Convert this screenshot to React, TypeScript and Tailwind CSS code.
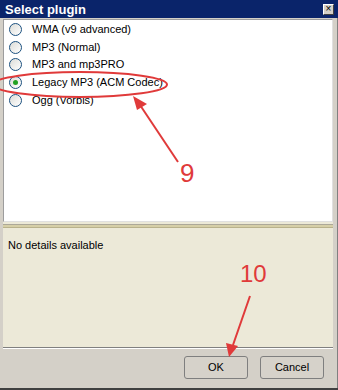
import React from "react";

const plugins = [
  "WMA (v9 advanced)",
  "MP3 (Normal)",
  "MP3 and mp3PRO",
  "Legacy MP3 (ACM Codec)",
  "Ogg (Vorbis)",
];

const Radio: React.FC<{ checked?: boolean }> = ({ checked }) => (
  <span className="flex items-center justify-center w-[13px] h-[13px] rounded-full border-[1.5px] border-[#1c5180] bg-gradient-to-br from-[#dcdcd7] to-white">
    {checked && <span className="w-[5px] h-[5px] rounded-full bg-[#21a121]" />}
  </span>
);

const Button: React.FC<{ label: string }> = ({ label }) => (
  <button className="w-[64px] h-[23px] rounded-[3px] border border-[#7f7f7f] bg-[#d6d2ca] text-[11px] text-black">
    {label}
  </button>
);

const App: React.FC = () => {
  return (
    <div
      className="relative w-[338px] h-[390px] flex flex-col bg-[#d4d0c8] border-b-2 border-[#404040] overflow-hidden"
      style={{ fontFamily: '"Liberation Sans", Arial, sans-serif' }}
    >
      {/* title bar */}
      <div className="h-[18px] bg-[#0a246a] flex items-center justify-between pl-[5px] pr-[4px]">
        <span className="text-white text-[13px] font-bold leading-none">Select plugin</span>
        <span className="w-[11px] h-[11px] flex items-center justify-center bg-[#d4d0c8] border border-t-white border-l-white border-r-[#404040] border-b-[#404040] text-[10px] leading-none text-black">
          ×
        </span>
      </div>

      <div className="flex-1 flex flex-col pl-[3px] pr-[4px] border-r border-[#808080]">
        {/* plugin list */}
        <div className="mt-[1px] h-[203px] bg-white border border-[#9d9d9d] border-r-[#e0e0e0] border-b-[#e0e0e0] pt-[0.5px]">
          {plugins.map((p, i) => (
            <div key={p} className="h-[17.7px] flex items-center pl-[5px] gap-[10px]">
              <Radio checked={i === 3} />
              <span className="text-[11px] text-black leading-none">{p}</span>
            </div>
          ))}
        </div>

        {/* splitter */}
        <div className="flex flex-col">
          <div className="h-[2px] bg-[#ece9d8]" />
          <div className="h-[1px] bg-[#aca899]" />
          <div className="h-[2px] bg-[#d6cfa8]" />
          <div className="h-[1px] bg-[#b9b28c]" />
          <div className="h-[1px] bg-[#ece9d8]" />
        </div>

        {/* details */}
        <div className="h-[118px] bg-[#ece9d8] px-[5px] pt-[3px]">
          <span className="text-[11px] leading-[16px] text-black">No details available</span>
        </div>
        <div className="h-[1px] bg-[#808080]" />
        <div className="h-[1px] bg-white" />

        {/* buttons */}
        <div className="flex-1 flex items-start justify-end gap-[12px] pt-[7px] pr-[9px]">
          <Button label="OK" />
          <Button label="Cancel" />
        </div>
      </div>

      {/* annotations */}
      <svg className="absolute inset-0 pointer-events-none" width="338" height="390">
        <ellipse cx="80" cy="84.5" rx="87" ry="12.5" fill="none" stroke="#e03a3a" strokeWidth="2" />
        <line x1="178" y1="162" x2="140" y2="105" stroke="#e03a3a" strokeWidth="2" />
        <polygon points="133,96 147,104 137,110" fill="#e03a3a" />
        <text x="180" y="182" fill="#e03a3a" fontSize="26" fontFamily="Liberation Sans, Arial, sans-serif">9</text>
        <text x="240" y="282" fill="#e03a3a" fontSize="24" fontFamily="Liberation Sans, Arial, sans-serif">10</text>
        <line x1="250" y1="296" x2="233" y2="345" stroke="#e03a3a" strokeWidth="2" />
        <polygon points="229,357 226,343 238,346" fill="#e03a3a" />
      </svg>
    </div>
  );
};

export default App;
